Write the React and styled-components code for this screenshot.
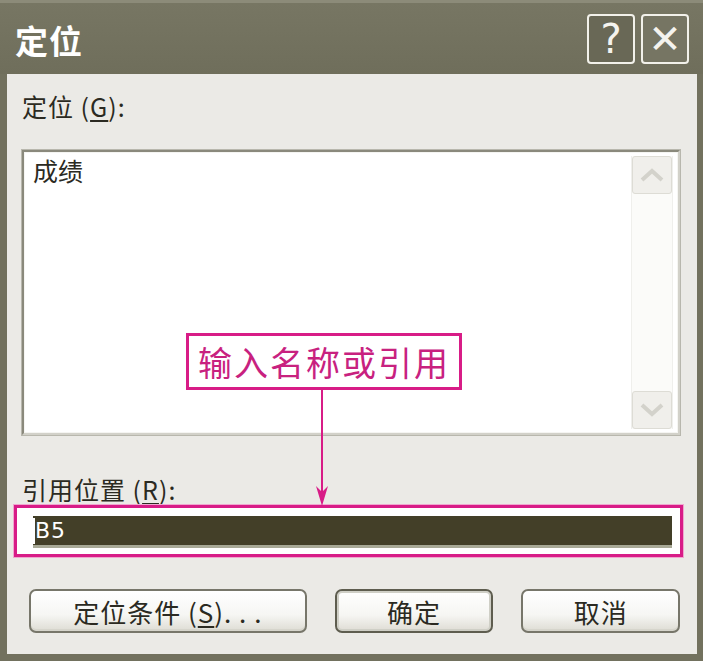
import React from "react";
import styled, { createGlobalStyle } from "styled-components";

const Global = createGlobalStyle`
  html, body { margin: 0; padding: 0; background: #ebeae6; }
  body { font-family: "Noto Sans CJK SC", "DejaVu Sans", sans-serif; }
`;

const Win = styled.div`
  width: 703px;
  height: 661px;
  box-sizing: border-box;
  display: flex;
  flex-direction: column;
  background: #72715e;
  border-top: 3px solid #8c8b79;
  padding: 0 6px 7px 7px;
  overflow: hidden;
`;

const TitleBar = styled.div`
  height: 71px;
  display: flex;
  align-items: center;
  background: linear-gradient(#777663, #6f6e5b);
  margin: 0 -6px 0 -7px;
  padding-left: 15px;
  padding-right: 14px;
`;

const Title = styled.div`
  flex: 1;
  color: #ffffff;
  font-size: 33px;
  font-weight: 700;
  letter-spacing: 1px;
  padding-top: 2px;
`;

const CapButton = styled.div`
  width: 48px;
  height: 50px;
  box-sizing: border-box;
  border: 2px solid #f2f1ea;
  border-radius: 4px;
  margin-left: 6px;
  display: flex;
  align-items: center;
  justify-content: center;
  background: ${(p) => (p.$dark ? "#696856" : "#767563")};
  color: #f4f3ee;
  font-family: "DejaVu Sans", sans-serif;
  font-size: 40px;
  line-height: 1;
`;

const Client = styled.div`
  position: relative;
  flex: 1;
  background: #ebeae6;
  display: flex;
  flex-direction: column;
  padding: 16px 17px 0 15px;
`;

const Label = styled.div`
  font-size: 25px;
  line-height: 32px;
  color: #2b2a22;
  letter-spacing: 1px;
  u { text-decoration: underline; text-underline-offset: 3px; }
`;

const ListBox = styled.div`
  margin-top: 28px;
  height: 285px;
  box-sizing: border-box;
  background: #ffffff;
  border: 2px solid;
  border-color: #8a897c #d2d1c9 #d2d1c9 #8a897c;
  box-shadow: inset 0 0 0 1px #f5f5f2, 0 0 0 1px #b8b7ad;
  display: flex;
`;

const ListItems = styled.div`
  flex: 1;
  padding: 1px 9px;
  font-size: 25px;
  line-height: 34px;
  color: #2b2a22;
`;

const ScrollBar = styled.div`
  width: 40px;
  margin: 4px 5px 4px 0;
  background: #fbfbf9;
  border-left: 1px solid #efefec;
  border-right: 1px solid #efefec;
  display: flex;
  flex-direction: column;
  justify-content: space-between;
`;

const ScrollBtn = styled.div`
  height: 38px;
  box-sizing: border-box;
  border: 1px solid #dddcd5;
  border-radius: 3px;
  background: #f0efeb;
  display: flex;
  align-items: center;
  justify-content: center;
`;

const RefLabel = styled(Label)`
  margin-top: 38px;
`;

const HiBox = styled.div`
  margin: 0 -3px 0 -8px;
  height: 52px;
  box-sizing: border-box;
  border: 3px solid #d81c87;
  box-shadow: 0 0 0 1px #f0a7cf;
  background: #ffffff;
  padding: 8px 8px 6px 16px;
  display: flex;
`;

const RefInput = styled.div`
  flex: 1;
  background: #433f28;
  border-bottom: 3px solid #a8a996;
  display: flex;
  align-items: center;
  font-family: "DejaVu Sans", sans-serif;
  font-size: 22px;
  color: #ffffff;
  letter-spacing: 1px;
  span { border-left: 2px solid #ffffff; padding-left: 0; line-height: 26px; }
`;

const ButtonRow = styled.div`
  display: flex;
  margin-top: 32px;
  padding-left: 7px;
  gap: 28px;
`;

const Btn = styled.div`
  width: ${(p) => p.$w}px;
  height: 44px;
  box-sizing: border-box;
  border: 2px solid ${(p) => (p.$default ? "#5e5d4f" : "#77766a")};
  border-radius: 7px;
  background: linear-gradient(#ffffff 0%, #f6f6f3 60%, #dedcd4 100%);
  box-shadow: ${(p) => (p.$default ? "inset 0 0 0 2px #cfcfc6" : "inset 0 -2px 0 #d6d5cc")};
  display: flex;
  align-items: center;
  justify-content: center;
  font-size: 26px;
  color: #2b2a22;
  letter-spacing: 1px;
  u { text-decoration: underline; text-underline-offset: 3px; }
`;

const Callout = styled.div`
  position: absolute;
  left: 179px;
  top: 259px;
  width: 276px;
  height: 57px;
  box-sizing: border-box;
  border: 3px solid #d81c87;
  background: #ffffff;
  display: flex;
  align-items: center;
  justify-content: center;
  font-family: "Noto Sans CJK SC", serif;
  font-size: 34px;
  color: #c8217f;
  letter-spacing: 2px;
`;

const Arrow = styled.svg`
  position: absolute;
  left: 300px;
  top: 316px;
`;

const Chevron = ({ up }) => (
  <svg width="26" height="16" viewBox="0 0 26 16">
    <path
      d={up ? "M3 13 L13 4 L23 13" : "M3 3 L13 12 L23 3"}
      fill="none"
      stroke="#d3d2cb"
      strokeWidth="4"
    />
  </svg>
);

export default function App() {
  return (
    <>
      <Global />
      <Win>
        <TitleBar>
          <Title>定位</Title>
          <CapButton $dark>?</CapButton>
          <CapButton>✕</CapButton>
        </TitleBar>
        <Client>
          <Label>
            定位 (<u>G</u>):
          </Label>
          <ListBox>
            <ListItems>成绩</ListItems>
            <ScrollBar>
              <ScrollBtn>
                <Chevron up />
              </ScrollBtn>
              <ScrollBtn>
                <Chevron />
              </ScrollBtn>
            </ScrollBar>
          </ListBox>
          <RefLabel>
            引用位置 (<u>R</u>):
          </RefLabel>
          <HiBox>
            <RefInput>
              <span>B5</span>
            </RefInput>
          </HiBox>
          <ButtonRow>
            <Btn $w={278}>
              定位条件 (<u>S</u>). . .
            </Btn>
            <Btn $w={159} $default>
              确定
            </Btn>
            <Btn $w={159}>取消</Btn>
          </ButtonRow>
          <Callout>输入名称或引用</Callout>
          <Arrow width="30" height="118" viewBox="0 0 30 118">
            <line x1="15" y1="0" x2="15" y2="104" stroke="#d81c87" strokeWidth="2" />
            <path d="M9 96 L15 116 L21 96 L15 102 Z" fill="#d81c87" />
          </Arrow>
        </Client>
      </Win>
    </>
  );
}
